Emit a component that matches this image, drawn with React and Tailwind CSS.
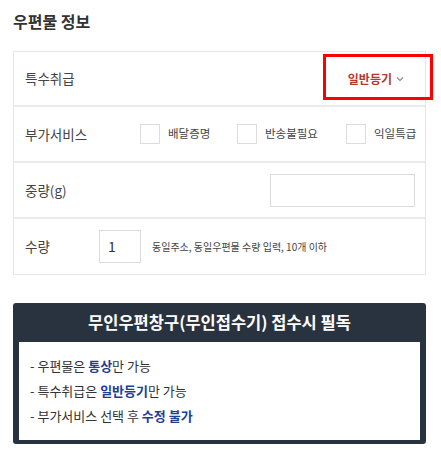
import React from "react";

const font = { fontFamily: '"Noto Sans CJK KR", "Noto Sans", sans-serif' };

export default function App() {
  return (
    <div className="w-[441px] h-[458px] bg-white text-[#333] relative" style={font}>
      <div className="pl-[13px] pr-[15px] pt-[10px]">
        <div className="h-[22px] leading-[22px] text-[16px] font-bold text-[#333]">우편물 정보</div>
        <div className="mt-[19px] border border-[#e6e6e6]">
          <div className="h-[55px] flex items-center justify-between pl-[11px] pr-[21px] border-b-2 border-[#ebebeb]">
            <span className="text-[13.5px] text-[#444]">특수취급</span>
            <span className="flex items-center text-[12px] font-bold text-[#b7372b]">
              일반등기
              <svg className="ml-[4px] mt-[1px]" width="8" height="6" viewBox="0 0 8 6" fill="none">
                <path d="M1 1.5 L4 4.5 L7 1.5" stroke="#888" strokeWidth="1.1" />
              </svg>
            </span>
          </div>
          <div className="h-[56px] flex items-center pl-[11px] border-b-2 border-[#ebebeb] whitespace-nowrap">
            <span className="w-[115px] text-[13.5px] text-[#444]">부가서비스</span>
            <div className="w-[97px] flex items-center">
              <div className="w-[20px] h-[20px] border border-[#dcdcdc] bg-white shrink-0" />
              <span className="ml-[8px] text-[11.5px] text-[#444]">배달증명</span>
            </div>
            <div className="w-[109px] flex items-center">
              <div className="w-[20px] h-[20px] border border-[#dcdcdc] bg-white shrink-0" />
              <span className="ml-[8px] text-[11.5px] text-[#444]">반송불필요</span>
            </div>
            <div className="flex items-center">
              <div className="w-[20px] h-[20px] border border-[#dcdcdc] bg-white shrink-0" />
              <span className="ml-[8px] text-[11.5px] text-[#444]">익일특급</span>
            </div>
          </div>
          <div className="h-[56px] flex items-center justify-between pl-[11px] pr-[10px] border-b-2 border-[#ebebeb]">
            <span className="text-[13.5px] text-[#444]">중량(g)</span>
            <div className="w-[145px] h-[33px] border border-[#dcdcdc] bg-white" />
          </div>
          <div className="h-[55px] flex items-center pl-[11px] whitespace-nowrap">
            <span className="w-[74px] text-[13.5px] text-[#444]">수량</span>
            <div className="w-[42px] h-[33px] border border-[#dcdcdc] bg-white flex items-center pl-[8px] text-[14px] text-[#333]">1</div>
            <span className="ml-[11px] text-[10px] text-[#444]">동일주소, 동일우편물 수량 입력, 10개 이하</span>
          </div>
        </div>
        <div className="mt-[28px] bg-[#29333f] rounded-[3px] px-[6px] pb-[4px] pt-0">
          <div className="h-[39px] flex items-center justify-center text-white text-[16.5px] font-bold">
            무인우편창구(무인접수기) 접수시 필독
          </div>
          <div className="bg-white h-[98px] pl-[11px] pt-[11px] text-[13px] text-[#333] leading-[25px]">
            <div>- 우편물은 <b className="text-[#1c3f8f]">통상</b>만 가능</div>
            <div>- 특수취급은 <b className="text-[#1c3f8f]">일반등기</b>만 가능</div>
            <div>- 부가서비스 선택 후 <b className="text-[#1c3f8f]">수정 불가</b></div>
          </div>
        </div>
      </div>
      <div className="absolute left-[323px] top-[54px] w-[110px] h-[46px] border-[3px] border-[#ff0000]" />
    </div>
  );
}
